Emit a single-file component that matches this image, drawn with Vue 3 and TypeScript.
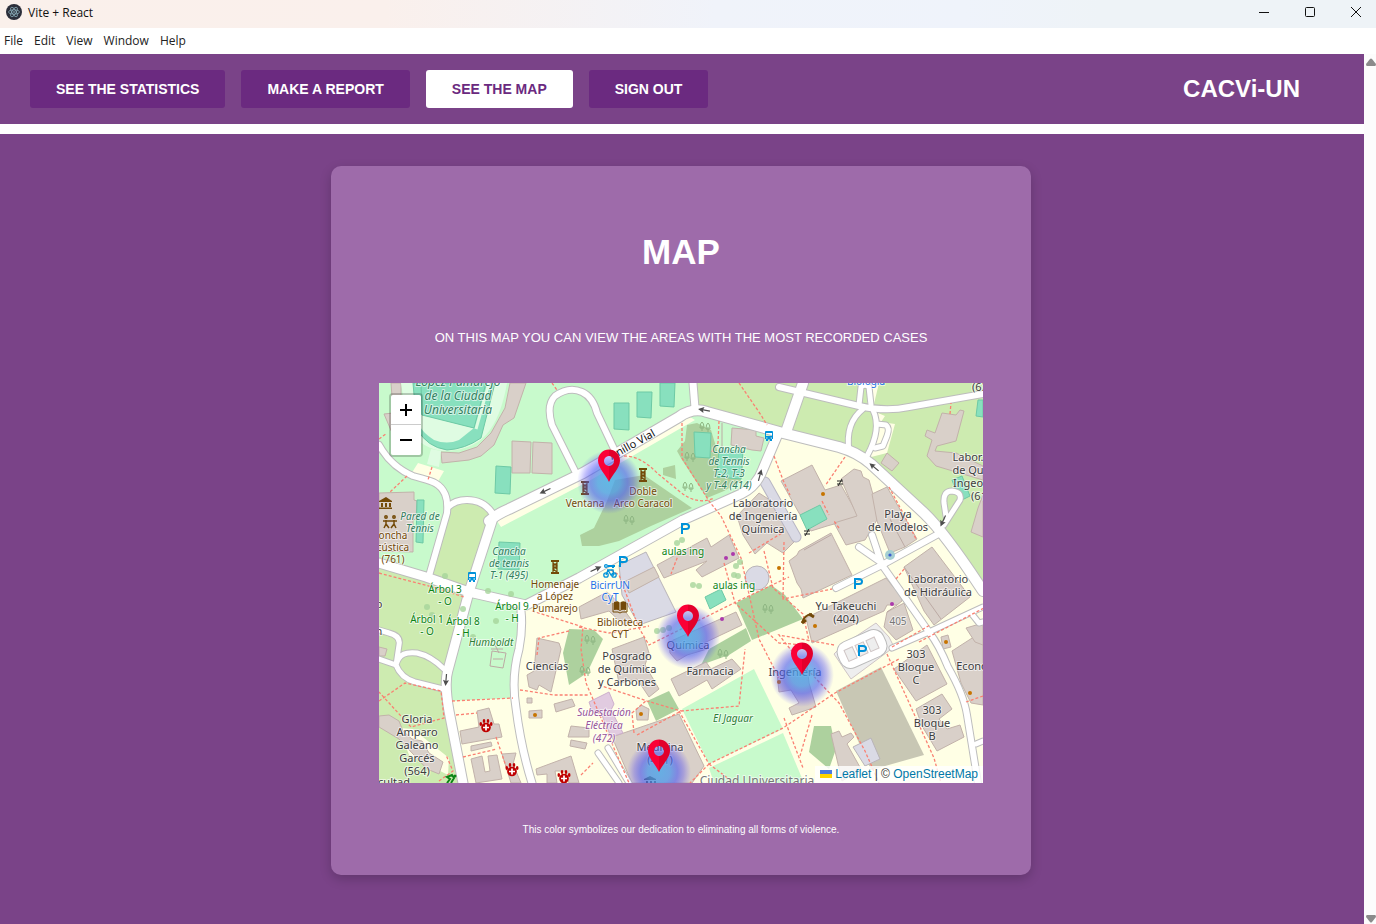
<script setup lang="ts">
import { ref } from 'vue'

interface Area { kind: string; pts: string }
interface Road { d: string; w: number }
interface Label { x: number; y: number; lines: string[]; kind: string }
interface Spot { x: number; y: number }
interface Arrow extends Spot { r: number }

const menu: string[] = ['File', 'Edit', 'View', 'Window', 'Help']
const tabs: string[] = ['SEE THE STATISTICS', 'MAKE A REPORT', 'SEE THE MAP', 'SIGN OUT']
const current = ref<string>('SEE THE MAP')

const areas: Area[] = [
  { kind: 'grass', pts: '318,0 604,0 604,205 563,149 543,130 490,80 404,50 313,27' },
  { kind: 'grass', pts: '70,125 80,119 97,118 115,132 90,209 50,195' },
  { kind: 'grass', pts: '0,182 50,195 90,210 67,297 67,306 83,400 0,400' },
  { kind: 'campus', pts: '147,222 304,137 372,108 397,53 470,68 490,80 543,130 563,149 604,205 604,400 83,400 72,318 134,315 140,240' },
  { kind: 'campus', pts: '39,80 65,88 57,102 32,91' },
  { kind: 'campus', pts: '118,138 200,96 311,34 316,37 210,98 122,144' },
  { kind: 'campus', pts: '490,0 500,0 494,25 488,22' },
  { kind: 'campus', pts: '499,30 506,33 502,39 516,41 508,70 488,75' },
  { kind: 'campus', pts: '20,345 34,346 70,375 69,392 30,372' },
  { kind: 'forest', pts: '308,42 318,40 332,47 338,67 345,80 364,82 362,98 345,108 328,115 303,77 298,68 306,58' },
  { kind: 'forest', pts: '236,97 265,92 313,125 272,143 240,158 220,163 203,163 201,152 215,145 228,118' },
  { kind: 'forest', pts: '284,85 296,82 297,96 284,92' },
  { kind: 'forest', pts: '357,220 392,202 406,212 424,236 373,257' },
  { kind: 'forest', pts: '330,266 367,245 372,258 350,272 322,282' },
  { kind: 'forest', pts: '268,318 290,308 300,326 277,338' },
  { kind: 'forest', pts: '190,246 215,247 224,256 208,290 190,302 184,270' },
  { kind: 'forest', pts: '435,343 452,343 457,366 450,386 430,369' },
  { kind: 'lawn', pts: '303,326 375,286 404,346 330,381' },
  { kind: 'lawn', pts: '330,385 404,350 425,400 335,400' },
  { kind: 'building', pts: '147,0 135,35 124,42 115,62 102,73 90,77 63,80 62,69 80,70 98,64 112,50 126,25 131,0' },
  { kind: 'building', pts: '12,0 22,0 22,14 13,14' },
  { kind: 'building', pts: '5,31 14,30 14,52' },
  { kind: 'building', pts: '133,58 152,59 151,90 133,90' },
  { kind: 'building', pts: '154,59 173,60 173,91 153,90' },
  { kind: 'building', pts: '0,110 35,109 35,117 38,118 37,136 34,137 34,169 0,168' },
  { kind: 'building', pts: '353,45 377,47 377,53 385,55 382,68 373,67 352,62' },
  { kind: 'building', pts: '402,98 433,82 446,107 462,102 480,134 448,143 432,148 420,130' },
  { kind: 'building', pts: '410,178 418,172 420,168 452,150 473,192 424,215 422,206 418,200' },
  { kind: 'building', pts: '462,96 475,86 482,88 484,94 490,97 493,108 502,130 486,157 467,162 455,140 478,133' },
  { kind: 'building', pts: '493,111 508,104 538,156 526,164 511,170 498,138' },
  { kind: 'building', pts: '563,30 577,32 581,27 585,28 577,58 558,63 556,68 577,70 604,83 604,97 557,83 548,73 553,57 546,53 548,47 556,50' },
  { kind: 'building', pts: '508,70 520,80 513,88 502,80' },
  { kind: 'building', pts: '599,125 604,112 604,154 592,149' },
  { kind: 'building', pts: '525,184 553,164 591,214 555,242 545,228' },
  { kind: 'building', pts: '427,235 507,195 515,205 523,204 523,218 518,222 508,222 505,228 433,260' },
  { kind: 'building', pts: '508,229 525,220 534,247 517,257 505,244' },
  { kind: 'building', pts: '278,182 328,155 332,164 350,152 360,175 323,194 317,187 328,178 285,195' },
  { kind: 'building', pts: '364,152 358,133 380,110 394,119 420,154 404,170 388,160 376,171' },
  { kind: 'hall', pts: '240,182 267,169 297,229 260,242 243,212' },
  { kind: 'building', pts: '245,199 275,184 280,194 250,210' },
  { kind: 'building', pts: '200,224 228,209 240,220 254,239 246,243 230,228 202,236' },
  { kind: 'building', pts: '290,259 357,229 363,242 325,260 328,266 308,272 298,278 291,270' },
  { kind: 'building', pts: '292,296 327,279 332,286 353,276 362,286 333,306 328,297 300,313' },
  { kind: 'building', pts: '233,354 300,331 325,383 313,400 253,400' },
  { kind: 'power', pts: '210,319 230,309 235,321 232,327 244,350 232,354 222,330 214,330' },
  { kind: 'building', pts: '257,327 262,322 270,326 269,337 258,337' },
  { kind: 'building', pts: '233,266 265,254 270,270 266,282 280,306 270,314 258,296 240,300' },
  { kind: 'building', pts: '158,255 180,260 182,266 172,309 160,302 158,307 150,304 148,292 155,288' },
  { kind: 'building', pts: '98,328 110,325 115,341 120,341 123,354 83,361 81,348 100,344' },
  { kind: 'building', pts: '92,363 112,359 113,363 92,368' },
  { kind: 'building', pts: '92,376 103,373 106,389 111,388 109,373 118,372 123,396 97,400' },
  { kind: 'building', pts: '175,321 193,316 196,323 177,329' },
  { kind: 'building', pts: '150,328 163,327 163,335 150,335' },
  { kind: 'building', pts: '148,315 153,315 153,320 148,320' },
  { kind: 'building', pts: '192,343 210,345 210,354 189,354' },
  { kind: 'building', pts: '192,357 208,360 206,366 191,363' },
  { kind: 'building', pts: '157,386 192,373 200,400 190,400 186,388 176,388 178,400 168,400 168,391 158,392' },
  { kind: 'building', pts: '123,371 137,370 134,381 142,400 132,400' },
  { kind: 'building', pts: '0,333 10,332 20,338 24,348 33,356 43,358 50,370 64,379 60,391 48,386 20,356 0,344' },
  { kind: 'building', pts: '398,290 428,282 430,300 437,324 413,332 410,325 420,320 412,307 400,309' },
  { kind: 'plaza', pts: '457,308 502,284 545,372 492,387' },
  { kind: 'hall', pts: '474,364 492,355 501,376 486,383' },
  { kind: 'building', pts: '452,351 460,348 463,354 472,350 475,354 468,361 482,386 463,398' },
  { kind: 'building', pts: '515,286 548,262 568,301 537,318' },
  { kind: 'building', pts: '537,326 563,311 573,326 560,336 568,346 581,342 585,354 558,368 543,343' },
  { kind: 'building', pts: '573,268 604,248 604,322 592,320 582,300' },
  { kind: 'building', pts: '587,245 604,240 604,262 596,259' },
  { kind: 'building', pts: '562,254 569,252 572,264 564,266' },
  { kind: 'building', pts: '0,264 8,266 6,273 0,273' },
  { kind: 'pitch', pts: '117,83 132,84 131,111 116,110' },
  { kind: 'pitch', pts: '38,117 45,117 44,160 37,159' },
  { kind: 'pitch', pts: '235,20 250,20 250,47 235,46' },
  { kind: 'pitch', pts: '258,9 273,9 272,35 258,34' },
  { kind: 'pitch', pts: '281,0 296,0 295,24 281,23' },
  { kind: 'pitch', pts: '315,49 332,50 331,75 316,74' },
  { kind: 'pitch', pts: '340,67 364,68 362,96 338,94' },
  { kind: 'pitch', pts: '120,159 141,160 140,187 119,186' },
  { kind: 'pitch', pts: '421,132 441,122 448,136 428,147' },
  { kind: 'pitch', pts: '326,214 342,206 347,217 331,226' },
  { kind: 'pitch', pts: '599,17 604,17 604,34 597,33' },
  { kind: 'pitch', pts: '573,97 583,93 591,113 581,118' },
  { kind: 'parking', pts: '455,271 464,262 497,240 510,254 515,264 472,296' },
]

const roads: Road[] = [
  { d: 'M0 62C10 80 22 88 34 93C50 98 60 98 66 111Q69 118 68 130L50 193', w: 6 },
  { d: 'M69 124Q76 117 88 117Q106 117 115 133', w: 6 },
  { d: 'M0 276L17 282C20 270 28 269 38 270Q52 273 65 286M17 282Q22 295 36 299L64 306M17 282L20 262Q22 253 10 250L0 247', w: 5 },
  { d: 'M196 88L173 42Q167 22 176 13Q190 3 203 9Q214 14 218 30L236 68', w: 6 },
  { d: 'M400 4L480 23Q507 29 530 24L604 11', w: 6 },
  { d: 'M424 0L407 49', w: 10 },
  { d: 'M484 26Q466 40 470 68M494 27Q503 46 488 73', w: 5 },
  { d: 'M480 22L482 4Q486 0 490 4L492 22', w: 5 },
  { d: 'M498 41L507 42Q511 45 508 53L504 63L496 65', w: 5 },
  { d: 'M567 133L565 120Q564 108 573 108Q583 109 581 117L565 142', w: 5 },
  { d: 'M457 205L503 182L563 149M480 164L503 180M493 152L503 182L515 199L550 249Q560 262 569 284Q585 312 588 332L599 400', w: 6 },
  { d: 'M513 265L550 249L604 224M592 230L600 240L604 239', w: 5 },
  { d: 'M597 361L604 358', w: 5 },
  { d: 'M219 370L240 400M229 365L250 400', w: 5 },
  { d: 'M314 0L316 25', w: 7 },
  { d: 'M142 228Q144 245 140 266Q132 295 137 325Q142 365 153 400', w: 7 },
  { d: 'M0 180L47 194L90 209L147 222L200 195L304 137L362 111Q378 103 384 86L398 53', w: 9 },
  { d: 'M113 138L90 209L69 287Q65 300 70 328L84 400', w: 9 },
  { d: 'M110 138Q118 131 130 126L204 90L300 34Q314 24 328 29L404 50L460 64Q478 69 492 81L545 130Q566 150 604 208', w: 10 },
]

const paths: string[] = [
  'M0 190L50 203L85 214', 'M53 84L49 97M28 93L10 110', 'M0 318L26 300L62 308L65 335L32 344L0 309',
  'M73 318L134 315M141 307L175 312L210 312', 'M77 332L98 330M117 354L130 392M84 374L118 366',
  'M153 228L204 244L202 266L207 300L250 400', 'M158 272L160 255L190 248', 'M303 40L303 75L330 118L342 133L362 175L380 256L400 295',
  'M340 38L339 60L332 70', 'M245 73Q262 73 278 90L300 108Q318 123 335 115', 'M360 0L382 32L388 42',
  'M395 73L404 97L411 112M466 74L446 103M443 118L450 132', 'M510 104L524 130L537 156',
  'M232 187L240 192L260 245L270 262L355 220L410 194', 'M200 244L230 250L270 243M345 180L356 220L400 260L425 262',
  'M385 168L394 205L424 231L430 258M405 159L404 216L453 206', 'M455 262L400 252L424 282L460 320L486 368L500 400',
  'M258 352L302 328L360 323L366 266M300 328L330 381L404 345L456 310L520 276', 'M220 302L268 318L302 328',
  'M255 350L253 330L268 317M330 381L311 400M330 381L355 400', 'M405 335L424 385M433 332L421 373',
  'M508 271L555 375L562 400M513 264L551 242', 'M517 196L526 185M460 145L455 138', 'M540 259L605 225M587 319L604 313',
  'M202 392L214 380M60 398L74 388L67 372', 'M571 31L572 20M0 56L8 50M173 0L178 7', 'M300 170L292 191M370 170L403 150',
]

const labels: Label[] = [
  { x: 79, y: 3, lines: ['López Pamarejo', 'de la Ciudad', 'Universitaria'], kind: 'sport big' },
  { x: 41, y: 137, lines: ['Pared de', 'Tennis'], kind: 'sport' },
  { x: 130, y: 172, lines: ['Cancha', 'de tennis', 'T-1 (495)'], kind: 'sport' },
  { x: 350, y: 70, lines: ['Cancha', 'de Tennis', 'T-2, T-3', 'y T-4 (414)'], kind: 'sport' },
  { x: 14, y: 156, lines: ['oncha', 'cústica', '(761)'], kind: 'brown' },
  { x: 176, y: 205, lines: ['Homenaje', 'a López', 'Pumarejo'], kind: 'brown' },
  { x: 264, y: 112, lines: ['Doble', 'Arco Caracol'], kind: 'brown' },
  { x: 206, y: 124, lines: ['Ventana'], kind: 'brown' },
  { x: 241, y: 243, lines: ['Biblioteca', 'CYT'], kind: 'brown' },
  { x: 66, y: 210, lines: ['Árbol 3', '- O'], kind: 'green' },
  { x: 48, y: 240, lines: ['Árbol 1', '- O'], kind: 'green' },
  { x: 84, y: 242, lines: ['Árbol 8', '- H'], kind: 'green' },
  { x: 133, y: 227, lines: ['Árbol 9', '- H'], kind: 'green' },
  { x: 304, y: 172, lines: ['aulas ing'], kind: 'green' },
  { x: 355, y: 206, lines: ['aulas ing'], kind: 'green' },
  { x: 112, y: 263, lines: ['Humboldt'], kind: 'park' },
  { x: 354, y: 339, lines: ['El Jaguar'], kind: 'park' },
  { x: 231, y: 206, lines: ['BicirrUN', 'CyT'], kind: 'blue' },
  { x: 487, y: 2, lines: ['Biología'], kind: 'blue' },
  { x: 384, y: 124, lines: ['Laboratorio', 'de Ingeniería', 'Química'], kind: 'plain' },
  { x: 519, y: 135, lines: ['Playa', 'de Modelos'], kind: 'plain' },
  { x: 559, y: 200, lines: ['Laboratorio', 'de Hidráulica'], kind: 'plain' },
  { x: 467, y: 227, lines: ['Yu Takeuchi', '(404)'], kind: 'plain' },
  { x: 519, y: 242, lines: ['405'], kind: 'faded' },
  { x: 537, y: 275, lines: ['303', 'Bloque', 'C'], kind: 'plain' },
  { x: 553, y: 331, lines: ['303', 'Bloque', 'B'], kind: 'plain' },
  { x: 593, y: 287, lines: ['Econo'], kind: 'plain' },
  { x: 589, y: 78, lines: ['Labor.', 'de Qu', 'Ingeo'], kind: 'plain' },
  { x: 600, y: 117, lines: ['(61'], kind: 'plain' },
  { x: 601, y: 8, lines: ['(63'], kind: 'plain' },
  { x: 168, y: 287, lines: ['Ciencias'], kind: 'plain' },
  { x: 248, y: 277, lines: ['Posgrado', 'de Química', 'y Carbones'], kind: 'plain' },
  { x: 331, y: 292, lines: ['Farmacia'], kind: 'plain' },
  { x: 309, y: 266, lines: ['Química'], kind: 'plain' },
  { x: 416, y: 293, lines: ['Ingeniería'], kind: 'plain' },
  { x: 281, y: 368, lines: ['Medicina', '(471)'], kind: 'plain' },
  { x: 225, y: 333, lines: ['Subestación', 'Eléctrica', '(472)'], kind: 'power-name' },
  { x: 38, y: 340, lines: ['Gloria', 'Amparo', 'Galeano', 'Garcés', '(564)'], kind: 'plain' },
  { x: 15, y: 403, lines: ['cultad'], kind: 'plain' },
  { x: 378, y: 402, lines: ['Ciudad Universitaria'], kind: 'faded big' },
  { x: 0, y: 225, lines: ['o'], kind: 'plain' },
  { x: 0, y: 252, lines: ['n'], kind: 'plain' },
]

const pins: Spot[] = [{ x: 230, y: 99 }, { x: 309, y: 254 }, { x: 423, y: 292 }, { x: 280, y: 389 }]
const parkings: Spot[] = [{ x: 306, y: 151 }, { x: 244, y: 184 }, { x: 479, y: 206 }, { x: 483, y: 273 }]
const towers: Spot[] = [{ x: 206, y: 105 }, { x: 264, y: 92 }, { x: 176, y: 184 }]
const buses: Spot[] = [{ x: 390, y: 53 }, { x: 93, y: 194 }]
const paws: Spot[] = [{ x: 107, y: 343 }, { x: 133, y: 387 }, { x: 185, y: 394 }]
const amber: Spot[] = [{ x: 444, y: 111 }, { x: 400, y: 185 }, { x: 436, y: 243 }, { x: 156, y: 332 }, { x: 262, y: 331 }, { x: 400, y: 299 }, { x: 567, y: 259 }, { x: 591, y: 310 }]
const violet: Spot[] = [{ x: 347, y: 175 }, { x: 354, y: 171 }, { x: 343, y: 236 }, { x: 513, y: 221 }]
const trees: Spot[] = [
  { x: 66, y: 193 }, { x: 109, y: 208 }, { x: 132, y: 211 }, { x: 48, y: 224 }, { x: 84, y: 226 }, { x: 53, y: 232 }, { x: 117, y: 238 }, { x: 94, y: 254 },
  { x: 298, y: 160 }, { x: 303, y: 157 }, { x: 357, y: 183 }, { x: 361, y: 179 }, { x: 355, y: 192 }, { x: 359, y: 193 }, { x: 314, y: 202 }, { x: 320, y: 203 },
  { x: 278, y: 248 }, { x: 284, y: 247 }, { x: 290, y: 245 },
]
const groves: Spot[] = [{ x: 309, y: 104 }, { x: 311, y: 74 }, { x: 326, y: 44 }, { x: 250, y: 137 }, { x: 389, y: 226 }, { x: 211, y: 257 }, { x: 206, y: 288 }, { x: 344, y: 271 }]
const arrows: Arrow[] = [{ x: 166, y: 108, r: 155 }, { x: 325, y: 27, r: 190 }, { x: 381, y: 92, r: -75 }, { x: 495, y: 84, r: 220 }, { x: 217, y: 186, r: -25 }, { x: 67, y: 297, r: 95 }, { x: 564, y: 138, r: 115 }]

const lineHeight = (kind: string): number => {
  if (kind === 'sport big') return 14
  return ['brown', 'sport', 'green', 'blue'].includes(kind) ? 12 : 13
}
</script>

<template>
  <div class="window">
    <header class="titlebar">
      <svg class="app-icon" viewBox="0 0 16 16" aria-hidden="true">
        <circle cx="8" cy="8" r="8" fill="#2b2e3a" />
        <g fill="none" stroke="#9fcad6" stroke-width="0.6">
          <ellipse cx="8" cy="8" rx="5.4" ry="2.1" />
          <ellipse cx="8" cy="8" rx="5.4" ry="2.1" transform="rotate(60 8 8)" />
          <ellipse cx="8" cy="8" rx="5.4" ry="2.1" transform="rotate(120 8 8)" />
        </g>
        <circle cx="8" cy="8" r="0.8" fill="#9fcad6" />
      </svg>
      <span class="app-name">Vite + React</span>
      <div class="controls">
        <button type="button" aria-label="Minimize"><svg viewBox="0 0 12 12"><path d="M1 6.5H11" /></svg></button>
        <button type="button" aria-label="Maximize"><svg viewBox="0 0 12 12"><rect x="1.5" y="1.5" width="9" height="9" rx="1" /></svg></button>
        <button type="button" aria-label="Close"><svg viewBox="0 0 12 12"><path d="M1 1L11 11M11 1L1 11" /></svg></button>
      </div>
    </header>
    <nav class="menubar" aria-label="Application menu">
      <button v-for="m in menu" :key="m" type="button">{{ m }}</button>
    </nav>

    <div class="viewport">
      <div class="page">
        <div class="topbar">
          <nav class="tabs" aria-label="Sections">
            <button v-for="t in tabs" :key="t" type="button" :class="{ active: t === current }" @click="current = t">{{ t }}</button>
          </nav>
          <strong class="brand">CACVi-UN</strong>
        </div>
        <main class="content">
          <section class="card">
            <h1>MAP</h1>
            <p class="lead">ON THIS MAP YOU CAN VIEW THE AREAS WITH THE MOST RECORDED CASES</p>
            <div class="map">
              <svg class="tiles" viewBox="0 0 604 400" preserveAspectRatio="xMidYMid slice" role="img" aria-label="Campus map">
                <defs>
                  <radialGradient id="heat">
                    <stop offset="0" stop-color="#46a6ea" stop-opacity="0.78" />
                    <stop offset="0.35" stop-color="#4a96ea" stop-opacity="0.74" />
                    <stop offset="0.58" stop-color="#4c5cf0" stop-opacity="0.62" />
                    <stop offset="0.78" stop-color="#4c44f5" stop-opacity="0.34" />
                    <stop offset="1" stop-color="#5a50ff" stop-opacity="0" />
                  </radialGradient>
                  <linearGradient id="pin" x1="0" x2="1">
                    <stop offset="0.5" stop-color="#fb0036" />
                    <stop offset="0.5" stop-color="#e3002b" />
                  </linearGradient>
                </defs>
                <rect width="604" height="400" fill="#c8facc" />
                <polygon v-for="(a, i) in areas" :key="'a' + i" :points="a.pts" :class="a.kind" />
                <g>
                  <path d="M22 0H128Q122 35 107 52Q92 68 64 68Q44 66 30 48Z" fill="#dffce2" />
                  <path d="M34 0H116L102 55Q86 66 68 67Q48 64 38 46Z" class="pitch" />
                  <path d="M40 31L95 45L80 57Q68 62 55 57Q44 50 40 42Z" fill="#dffce2" />
                  <path d="M42 0H107L95 45L43 32Z" class="pitch" />
                  <path d="M110 0L97 46" fill="none" stroke="#dffce2" stroke-width="3" />
                  <path d="M52 66L62 68L60 84L48 81Z" fill="#dffce2" />
                </g>
                <path d="M386 99L417 154" fill="none" stroke="#b9b7c4" stroke-width="11" stroke-linecap="round" />
                <path d="M386 99L417 154" fill="none" stroke="#dadae5" stroke-width="9" stroke-linecap="round" />
                <circle cx="378" cy="195" r="12" class="hall" />
                <path d="M425 167L452 152M525 184L562 236M511 136L526 164M518 222L508 229" class="wall" />
                <path d="M343 40V66M112 266H124M113 268L111 283L124 285L127 270ZM116 262L120 270M114 276H124" class="wall" />

                <path v-for="(r, i) in roads" :key="'c' + i" :d="r.d" class="casing" :stroke-width="r.w + 2" />
                <path v-for="(r, i) in roads" :key="'r' + i" :d="r.d" class="road" :stroke-width="r.w" />
                <g transform="rotate(-24 483 266)">
                  <rect x="461" y="255" width="44" height="22" rx="8" fill="none" stroke="#bbb" stroke-width="7" />
                  <rect x="461" y="255" width="44" height="22" rx="8" fill="#fff" stroke="#fff" stroke-width="5" />
                  <rect x="466" y="260" width="9" height="12" class="parking" />
                  <rect x="478" y="260" width="9" height="12" class="parking" />
                  <rect x="490" y="260" width="9" height="12" class="parking" />
                </g>
                <path v-for="(p, i) in paths" :key="'p' + i" :d="p" class="footpath" />

                <g v-for="(g, i) in groves" :key="'g' + i" class="grove" :transform="`translate(${g.x} ${g.y})`">
                  <path d="M-3 4V-1M3 5V0M-5 1Q-5 -4 -3 -5Q-1 -4 -1 1ZM1 2Q1 -3 3 -4Q5 -3 5 2Z" />
                </g>
                <circle v-for="(t, i) in trees" :key="'t' + i" :cx="t.x" :cy="t.y" r="3" fill="#a6d49b" opacity="0.8" />
                <circle cx="511" cy="172" r="5" fill="#a5cfd2" />
                <circle cx="511" cy="172" r="1.6" fill="#3a5fd0" />
                <g v-for="(a, i) in arrows" :key="'w' + i" :transform="`translate(${a.x} ${a.y}) rotate(${a.r})`">
                  <path d="M-6 0H2" stroke="#4d4d4d" stroke-width="1.2" />
                  <path d="M6 0L0 -3L1 0L0 3Z" fill="#4d4d4d" />
                </g>
                <circle v-for="(s, i) in amber" :key="'o' + i" :cx="s.x" :cy="s.y" r="2" fill="#c77400" />
                <circle v-for="(s, i) in violet" :key="'v' + i" :cx="s.x" :cy="s.y" r="2" fill="#ac39ac" />

                <text x="233" y="77" class="street" transform="rotate(-29 233 77)">Anillo Vial</text>
                <text v-for="(l, i) in labels" :key="'l' + i" :class="['label', ...l.kind.split(' ')]">
                  <tspan v-for="(line, n) in l.lines" :key="n" :x="l.x" :y="l.y + n * lineHeight(l.kind)">{{ line }}</tspan>
                </text>

                <g v-for="(s, i) in parkings" :key="'k' + i" :transform="`translate(${s.x} ${s.y})`">
                  <path fill-rule="evenodd" d="M-4 -11H1Q5 -11 5 -7.5Q5 -4 1 -4H-2V0H-4ZM-2 -9V-6H1Q3 -6 3 -7.5Q3 -9 1 -9Z" fill="#0092da" />
                </g>
                <g v-for="(s, i) in buses" :key="'b' + i" :transform="`translate(${s.x} ${s.y})`">
                  <path fill-rule="evenodd" d="M-3 -5H3Q4 -5 4 -4V3H3V5H1V3.500H-1V5H-3V3H-4V-4Q-4 -5 -3 -5ZM-3 -3V0H3V-3ZM-3 1.500V2.500H-1.500V1.500ZM1.500 1.500V2.500H3V1.500Z" fill="#0092da" />
                </g>
                <g v-for="(s, i) in towers" :key="'m' + i" :transform="`translate(${s.x} ${s.y})`">
                  <path d="M-4 -7H4V-5H-4ZM-4 5H4V7H-4Z" fill="#734a08" />
                  <path d="M-2 -5V5M2 -5V5M-2 -4L2 -1L-2 2L2 5M2 -4L-2 -1L2 2" fill="none" stroke="#734a08" stroke-width="1.2" />
                </g>
                <g v-for="(s, i) in paws" :key="'h' + i" :transform="`translate(${s.x} ${s.y})`" fill="#bf0000">
                  <circle cx="0" cy="1.500" r="4.800" />
                  <ellipse cx="-5.200" cy="-2" rx="1.300" ry="2" />
                  <ellipse cx="-2" cy="-5" rx="1.300" ry="2" />
                  <ellipse cx="2" cy="-5" rx="1.300" ry="2" />
                  <ellipse cx="5.200" cy="-2" rx="1.300" ry="2" />
                  <path d="M-3 1.500H3M0 -1.500V4.500" stroke="#fff" stroke-width="1.700" />
                </g>
                <path d="M0 118L7 114L13 118V119H0ZM2 120H4V124H2ZM6 120H8V124H6ZM10 120H12V124H10ZM0 124.500H13V126H0Z" fill="#734a08" />
                <path d="M265 396L271 393L277 396V397H265ZM267 398H269V400H267ZM271 398H273V400H271ZM275 398H277V400H275Z" fill="#4a3a30" />
                <g fill="none" stroke="#734a08" stroke-width="1.500">
                  <circle cx="7" cy="134" r="1.200" /><circle cx="15" cy="134" r="1.200" />
                  <path d="M4 138H18M7 137V141L5 145M7 141L10 145M15 137V141L12 145M15 141L17 145" />
                  <path d="M423 240Q425 232 433 231" stroke-width="2" />
                  <path d="M423 240L427 237M430 231L435 234" stroke-width="3" />
                </g>
                <path d="M235 219Q239 217 241 220Q243 217 247 219V227Q243 226 241 228Q239 226 235 227Z" fill="#734a08" />
                <path d="M234 220V229H239L241 230L243 229H248V220" fill="none" stroke="#734a08" />
                <path d="M241 220V227" fill="none" stroke="#e9dfca" />
                <g fill="none" stroke="#0092da" stroke-width="1.300">
                  <circle cx="227" cy="192" r="2.200" /><circle cx="235" cy="192" r="2.200" />
                  <path d="M227 192L229 187H234L235 192M229 187L232 192H235M228 187H230" />
                  <circle cx="227" cy="183" r="1.400" /><path d="M229 183H236M234 183V185" stroke-width="2" />
                </g>
                <path d="M458 98H464M458 101H464M463 96L459 103M425 148H431M425 151H431M430 146L426 153" fill="none" stroke="#222" />
                <path d="M68 400L71 396L68 394L73 392L75 395L72 400" fill="none" stroke="#0c8416" stroke-width="2" />
                <circle cx="76" cy="393" r="1.500" fill="#0c8416" />

                <circle v-for="(p, i) in pins" :key="'e' + i" :cx="p.x" :cy="p.y" r="32" fill="url(#heat)" />
                <g v-for="(p, i) in pins" :key="'n' + i" :transform="`translate(${p.x} ${p.y})`">
                  <path fill="url(#pin)" fill-rule="evenodd" d="M0 0C-3 -7 -11 -14 -11 -21.500A11 11 0 0 1 11 -21.500C11 -14 3 -7 0 0ZM0 -26A5 5 0 1 0 0.010 -26Z" />
                </g>
              </svg>
              <div class="zoom">
                <button type="button" aria-label="Zoom in"><svg viewBox="0 0 12 12"><path d="M0 6H12M6 0V12" /></svg></button>
                <button type="button" aria-label="Zoom out"><svg viewBox="0 0 12 12"><path d="M0 6H12" /></svg></button>
              </div>
              <div class="attribution">
                <a href="#leaflet"><svg class="flag" viewBox="0 0 12 8" aria-hidden="true"><path fill="#4c7be1" d="M0 0h12v4H0z" /><path fill="#ffd500" d="M0 4h12v4H0z" /></svg> Leaflet</a> | © <a href="#osm">OpenStreetMap</a>
              </div>
            </div>
            <p class="note">This color symbolizes our dedication to eliminating all forms of violence.</p>
          </section>
        </main>
      </div>
      <div class="scrollbar" aria-hidden="true">
        <svg viewBox="0 0 10 8"><path d="M4 1Q5 0 6 1L10 6Q10 8 9 8H1Q0 8 0 6Z" /></svg>
        <svg class="down" viewBox="0 0 10 8"><path d="M4 1Q5 0 6 1L10 6Q10 8 9 8H1Q0 8 0 6Z" /></svg>
      </div>
    </div>
  </div>
</template>

<style>
html,
body {
  margin: 0;
  background: #fff;
}
</style>

<style scoped>
.window {
  display: flex;
  flex-direction: column;
  min-height: 100vh;
  font-family: Arial, 'Liberation Sans', sans-serif;
}
button {
  border: 0;
  padding: 0;
  background: none;
  font: inherit;
  color: inherit;
}
.titlebar {
  display: flex;
  align-items: center;
  height: 28px;
  padding-left: 6px;
  background: linear-gradient(90deg, #faf0eb 0%, #faf0ec 28%, #f0f3fa 52%, #eff3fb 70%, #eef3f7 80%);
  font-family: 'Open Sans', 'Noto Sans', sans-serif;
  font-size: 12px;
  color: #111;
}
.app-icon {
  width: 16px;
  height: 16px;
  margin: 0 6px 4px 0;
}
.app-name {
  line-height: 26px;
  padding-bottom: 2px;
}
.controls {
  display: flex;
  margin: 0 0 4px auto;
}
.controls button {
  width: 46px;
  height: 24px;
  display: grid;
  place-items: center;
}
.controls svg {
  width: 12px;
  height: 12px;
  fill: none;
  stroke: #111;
}
.controls button:last-child {
  width: 40px;
  margin-left: 3px;
}
.menubar {
  display: flex;
  gap: 11px;
  height: 26px;
  padding: 0 4px 2px;
  box-sizing: border-box;
  font-family: 'Open Sans', 'Noto Sans', sans-serif;
  font-size: 12px;
  color: #222;
}
.viewport {
  display: flex;
  flex: 1;
}
.page {
  flex: 1;
  display: flex;
  flex-direction: column;
  gap: 10px;
  min-width: 0;
}
.topbar {
  display: flex;
  align-items: center;
  justify-content: space-between;
  padding: 16px 64px 16px 30px;
  background: #7a4388;
  color: #fff;
}
.tabs {
  display: flex;
  gap: 16px;
}
.tabs button {
  height: 38px;
  padding: 0 26px;
  border-radius: 3px;
  background: #6b2a80;
  font-size: 14px;
  font-weight: 700;
  white-space: nowrap;
}
.tabs button.active {
  background: #fff;
  color: #6b2a80;
}
.brand {
  font-size: 24px;
  line-height: 28px;
}
.content {
  flex: 1;
  padding: 32px 2px 48px 0;
  background: #7a4388;
}
.card {
  box-sizing: border-box;
  max-width: 700px;
  margin: 0 auto;
  padding: 65px 48px 39px;
  border-radius: 10px;
  background: #9e6baa;
  box-shadow: 0 4px 12px rgba(0, 0, 0, 0.2);
  color: #fff;
  text-align: center;
}
h1 {
  margin: 0;
  font-size: 35px;
  line-height: 42px;
}
.lead {
  margin: 57px 0 37px;
  font-size: 13px;
  line-height: 16px;
}
.note {
  margin: 41px 0 0;
  font-size: 10px;
  line-height: 12px;
}
.map {
  position: relative;
  height: 400px;
  overflow: hidden;
}
.tiles {
  display: block;
  width: 100%;
  height: 100%;
}
.grass { fill: #cdebb0; }
.campus { fill: #ffffe5; }
.lawn { fill: #c8facc; }
.forest { fill: #add19e; }
.building { fill: #d9d0c9; stroke: #c2b2aa; }
.hall { fill: #dadae5; stroke: #b9b4b8; }
.power { fill: #e1cbe0; stroke: #cdb0cc; }
.plaza { fill: #c8c7b4; }
.pitch { fill: #88e0be; stroke: #6dc9a5; }
.parking { fill: #eee; stroke: #cfc5c5; }
.wall { fill: none; stroke: #bcaaa4; }
.casing { fill: none; stroke: #bdbdbd; stroke-linecap: round; stroke-linejoin: round; }
.road { fill: none; stroke: #fff; stroke-linecap: round; stroke-linejoin: round; }
.footpath { fill: none; stroke: #fa8072; stroke-width: 1.3; stroke-dasharray: 3 2; }
.grove { fill: none; stroke: #8db582; }
.label,
.street {
  font-family: 'Noto Sans', sans-serif;
  font-size: 11px;
  fill: #3d3d3d;
  stroke: rgba(255, 255, 255, 0.6);
  stroke-width: 2px;
  stroke-linejoin: round;
  paint-order: stroke;
  text-anchor: middle;
}
.street { text-anchor: start; fill: #111; }
.label.brown { font-size: 10px; fill: #734a08; }
.label.green { font-size: 10px; fill: #0c8416; }
.label.blue { font-size: 10px; fill: #1f72e8; }
.label.sport { font-size: 10px; font-style: italic; fill: #33805f; }
.label.park { font-size: 10px; font-style: italic; fill: #2c7d36; }
.label.power-name { font-size: 10px; font-style: italic; fill: #96549a; }
.label.faded { font-size: 10px; fill: #777; }
.label.big { font-size: 12px; }
.zoom {
  position: absolute;
  top: 10px;
  left: 10px;
  border: 2px solid rgba(0, 0, 0, 0.2);
  border-radius: 4px;
}
.zoom button {
  display: grid;
  place-items: center;
  width: 30px;
  height: 30px;
  background: #fff;
  border-radius: 0 0 2px 2px;
}
.zoom button:first-child {
  border-bottom: 1px solid #ccc;
  border-radius: 2px 2px 0 0;
}
.zoom svg {
  width: 12px;
  height: 12px;
  stroke: #000;
  stroke-width: 2;
}
.attribution {
  position: absolute;
  right: 0;
  bottom: 0;
  padding: 0 5px;
  background: rgba(255, 255, 255, 0.8);
  color: #333;
  font-size: 12px;
  line-height: 17px;
}
.attribution a {
  color: #0078a8;
  text-decoration: none;
}
.flag {
  width: 12px;
  height: 8px;
}
.scrollbar {
  display: flex;
  flex-direction: column;
  justify-content: space-between;
  align-items: flex-end;
  width: 12px;
  padding: 4px 0 1px;
  box-sizing: border-box;
  background: #fcfcfc;
}
.scrollbar svg {
  width: 10px;
  height: 8px;
  fill: #8b8b8b;
}
.scrollbar .down {
  transform: rotate(180deg);
}
</style>
